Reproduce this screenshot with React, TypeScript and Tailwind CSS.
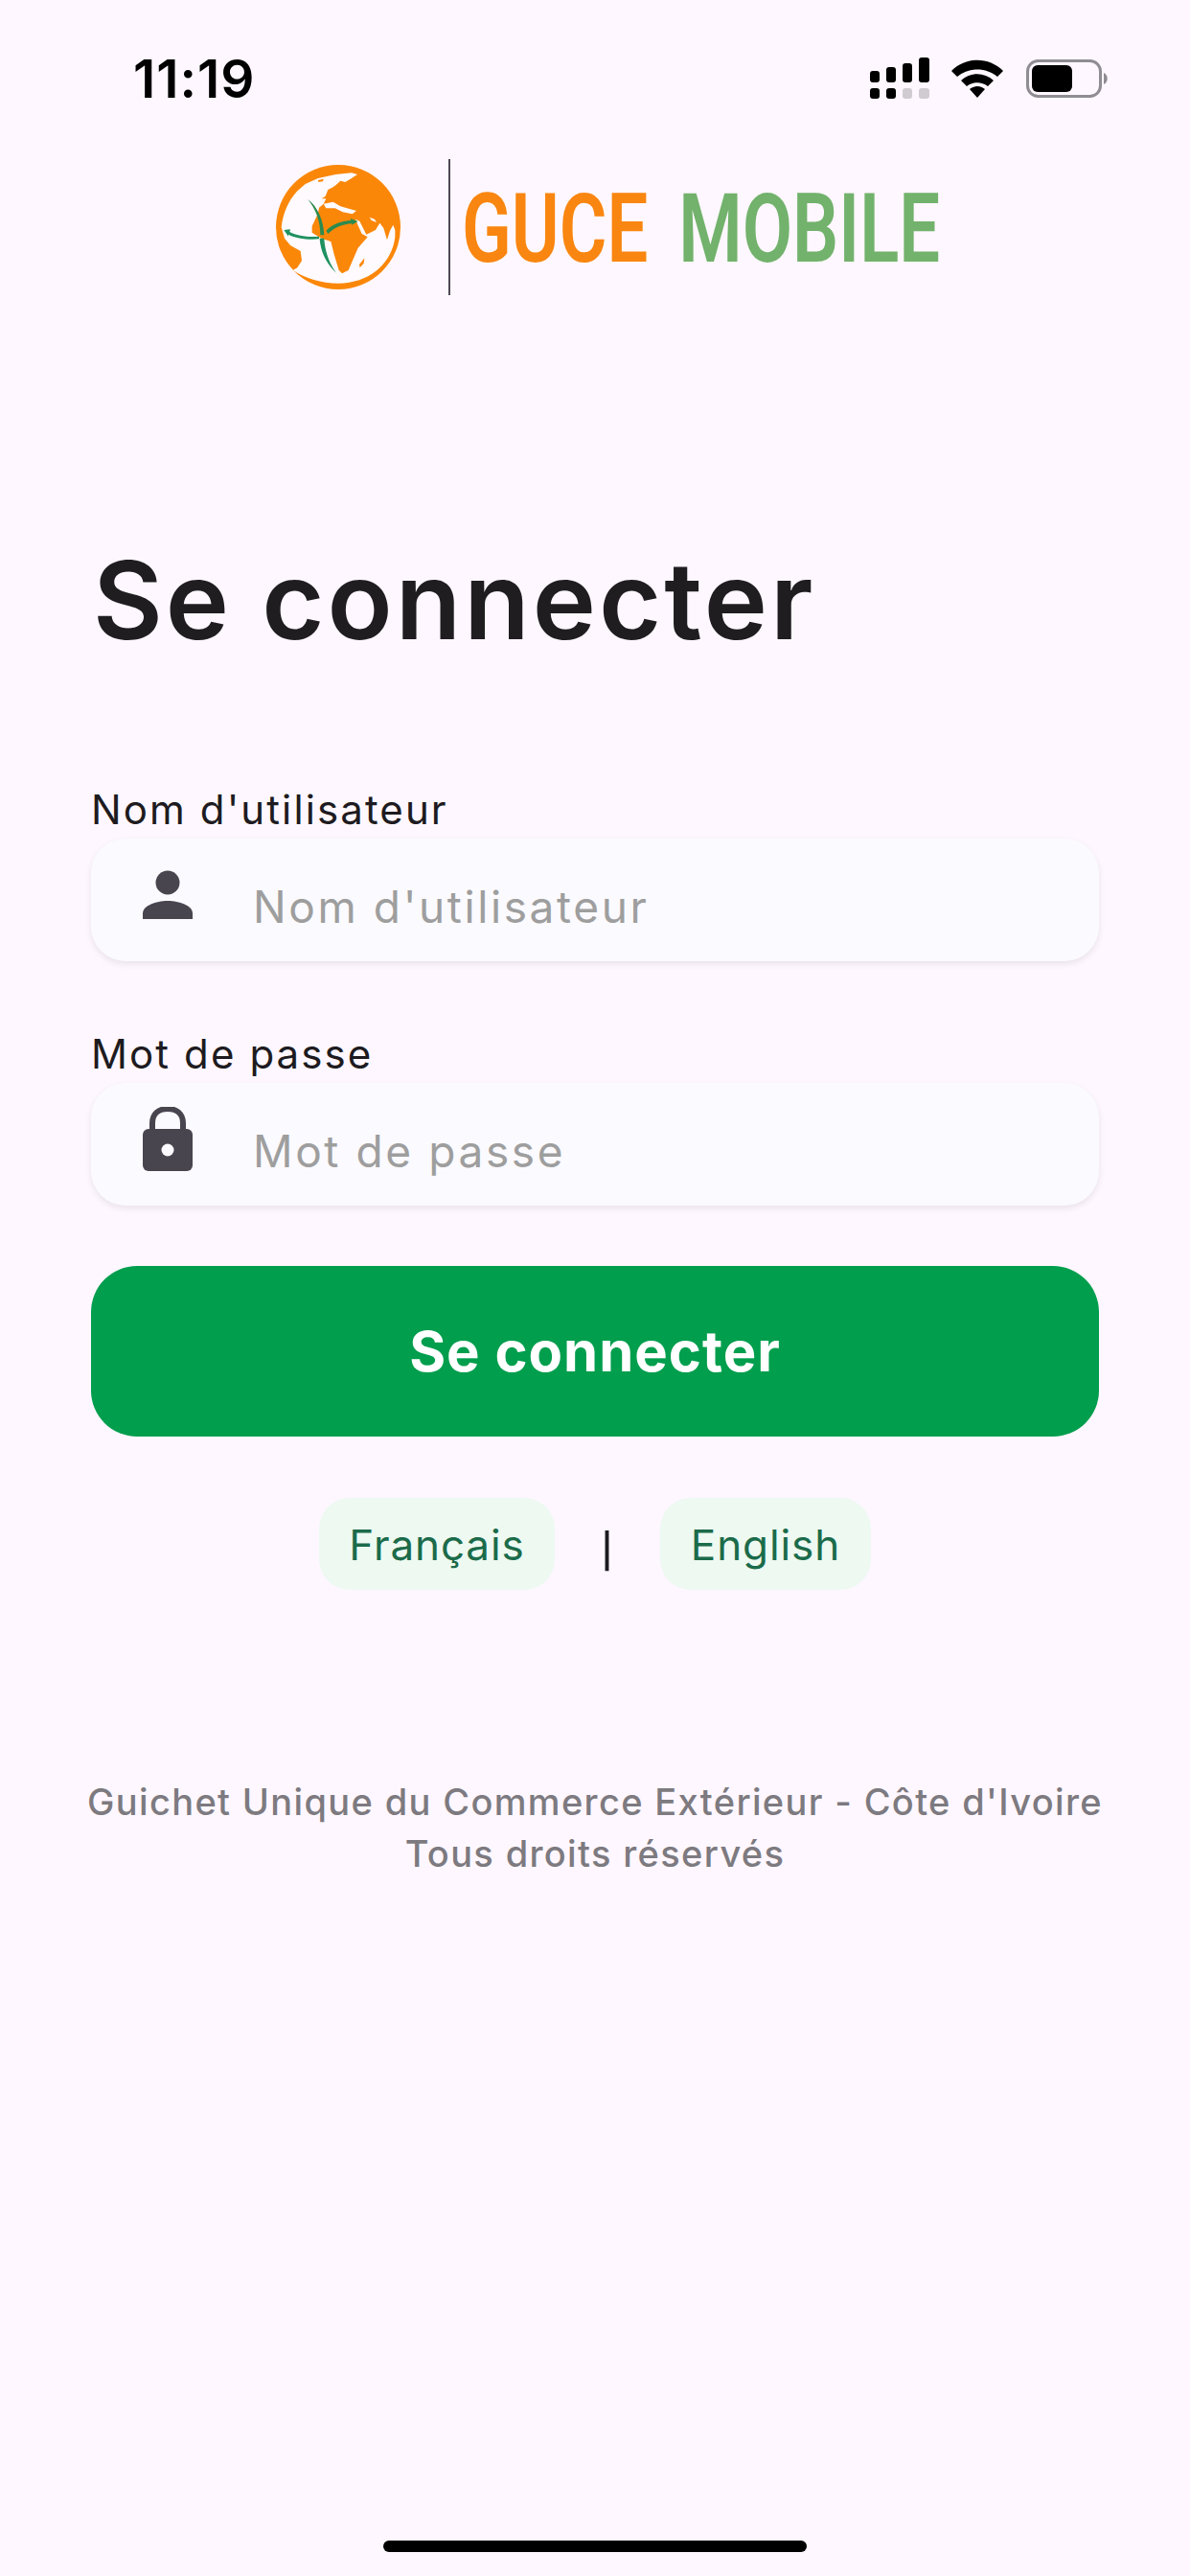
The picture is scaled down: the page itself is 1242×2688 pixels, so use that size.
import React from "react";

function Signal() {
    return (
        <svg width="62" height="43" viewBox="0 0 62 43">
            <rect x="0" y="14" width="10" height="12" rx="3" fill="#000" />
            <rect x="17" y="10" width="10" height="16" rx="3" fill="#000" />
            <rect x="34" y="6" width="10" height="20" rx="3" fill="#000" />
            <rect x="51" y="0" width="11" height="26" rx="3" fill="#000" />
            <rect x="0" y="32" width="10" height="11" rx="3" fill="#000" />
            <rect x="17" y="32" width="10" height="11" rx="3" fill="#000" />
            <rect x="34" y="32" width="10" height="11" rx="3" fill="#cfcbd0" />
            <rect x="51" y="32" width="11" height="11" rx="3" fill="#cfcbd0" />
        </svg>
    );
}

function Wifi() {
    return (
        <svg width="54" height="40" viewBox="0 0 54 40">
            <path d="M0 12 C15 -3 39 -3 54 12 L48 18 C36 8 18 8 6 18 Z" fill="#000" />
            <path d="M10 22 C20 13 34 13 44 22 L38 28 C31 23 23 23 16 28 Z" fill="#000" />
            <path d="M19 31 C24 27 30 27 35 31 L27 40 Z" fill="#000" />
        </svg>
    );
}

function Battery() {
    return (
        <svg width="86" height="40" viewBox="0 0 86 40">
            <rect x="1.5" y="1.5" width="76" height="37" rx="11" fill="none" stroke="#8f8c92" strokeWidth="3" />
            <rect x="6" y="6" width="42" height="28" rx="6" fill="#000" />
            <path d="M81 14 C86 16 86 24 81 26 Z" fill="#8f8c92" />
        </svg>
    );
}

function Globe() {
    return (
        <svg width="130" height="130" viewBox="83 70 390 390">
            <circle cx="278" cy="265" r="195" fill="#fb8708" />
            <path
                d="M150 152 L175 130 L215 112 L270 100 L320 95 L338 100 L320 112 L300 124 L285 120 L272 132 L262 140 L246 148 L238 168 L226 176 L240 176 L232 192 L218 204 L214 224 L196 262 L196 282 L225 300 L255 310 L265 350 L280 400 L290 410 L310 400 L325 365 L340 330 L370 296 L352 286 L340 260 L332 240 L345 246 L366 288 L395 274 L408 252 L420 268 L431 305 L440 276 L450 258 L456 274 L456 296 C448 370 385 440 278 441 C225 441 175 425 136 400 L150 392 L164 370 L160 340 L128 322 L110 300 L100 265 C105 222 122 182 150 152 Z"
                fill="#fefafd"
            />
            <path d="M232 192 L262 186 L285 200 L335 214 L322 224 L292 218 L268 206 L240 206 Z" fill="#fefafd" />
            <path d="M376 234 L392 240 L398 250 L382 244 Z" fill="#fefafd" />
            <path d="M344 382 L360 362 L358 378 L346 392 Z" fill="#fb8708" />
            <path d="M215 118 L232 114 L230 122 L216 124 Z" fill="#fb8708" />
            <path d="M183 178 C212 200 232 240 234 290 L222 290 C222 245 208 210 183 178 Z" fill="#2c8a4e" />
            <path d="M108 274 L128 272 L126 280 C150 292 185 298 218 294 L218 302 C185 306 145 300 122 288 L122 294 Z" fill="#1f9160" />
            <path d="M240 276 C262 252 295 246 318 244 L316 238 L340 247 L320 258 L320 254 C295 256 268 264 246 286 Z" fill="#2c8a4e" />
            <path d="M220 300 L234 300 C236 340 250 380 272 408 C245 385 222 345 220 300 Z" fill="#1f9160" />
        </svg>
    );
}

function UserIcon() {
    return (
        <svg width="52" height="52" viewBox="0 0 52 52">
            <circle cx="26" cy="13" r="12.5" fill="#49454f" />
            <path d="M0 51 L0 45 C0 37 14 32 26 32 C38 32 52 37 52 45 L52 51 Z" fill="#49454f" />
        </svg>
    );
}

function LockIcon() {
    return (
        <svg width="52" height="68" viewBox="0 0 52 68">
            <path d="M10 26 L10 17 C10 7 17 2 26 2 C35 2 42 7 42 17 L42 26" fill="none" stroke="#49454f" strokeWidth="6" />
            <rect x="0" y="23" width="52" height="44" rx="6" fill="#49454f" />
            <circle cx="26" cy="45" r="6.5" fill="#fbfafe" />
        </svg>
    );
}

function Field({ label, icon }: { label: string; icon: React.ReactNode }) {
    return (
        <div className="flex flex-col">
            <label className="h-[52px] text-[42px] leading-[52px] tracking-[2.1px] text-[#1d1b20]">
                {label}
            </label>
            <div className="mt-[4px] h-[128px] rounded-[36px] bg-[#fbfafe] shadow-[0_3px_6px_rgba(60,50,70,0.10)] flex items-center">
                <div className="w-[169px] shrink-0 flex justify-center pr-[9px] pb-[10px]">{icon}</div>
                <input
                    placeholder={label}
                    className="flex-1 min-w-0 bg-transparent outline-none text-[46px] tracking-[2.6px] text-[#1d1b20] placeholder:text-[#9e9e9e] pt-[14px]"
                />
            </div>
        </div>
    );
}

export default function App() {
    return (
        <div className="min-h-[2688px] h-[2688px] w-[1242px] bg-[#fef7ff] flex flex-col font-['Inter',sans-serif]">
            <div className="h-[166px] shrink-0 pl-[139px] pr-[85px] pt-[52px] flex justify-between items-start">
                <span className="text-[55px] leading-[60px] font-semibold text-black tracking-[1px]">11:19</span>
                <div className="flex items-center pt-[8px]">
                    <Signal />
                    <div className="w-[23px]" />
                    <Wifi />
                    <div className="w-[24px]" />
                    <Battery />
                </div>
            </div>

            <div className="flex items-center h-[142px] shrink-0 pl-[288px]">
                <Globe />
                <div className="w-[2px] h-[142px] bg-[#4c4854] ml-[50px]" />
                <div className="font-['Roboto',sans-serif] text-[100px] leading-[142px] font-semibold whitespace-nowrap origin-left scale-x-[0.76] ml-[12px] pt-[4px]">
                    <span className="text-[#f98610]">GUCE</span>
                    <span className="text-[#72b26c] ml-[42px]">MOBILE</span>
                </div>
            </div>

            <h1 className="mt-[250px] px-[97px] text-[112px] leading-[136px] font-semibold text-[#1f1d20] tracking-[3px]">
                Se connecter
            </h1>

            <div className="mt-[125px] px-[95px] flex flex-col gap-[71px]">
                <Field label="Nom d'utilisateur" icon={<UserIcon />} />
                <Field label="Mot de passe" icon={<LockIcon />} />
            </div>

            <div className="mt-[63px] mx-[95px] h-[178px] rounded-[48px] bg-[#009e4d] flex items-center justify-center text-white text-[58px] font-bold tracking-[1px]">
                Se connecter
            </div>

            <div className="mt-[64px] flex justify-center items-center text-[44px] tracking-[0.9px] text-[#1b6b4a]">
                <span className="h-[96px] w-[246px] rounded-[32px] bg-[#edf9f1] flex items-center justify-center pt-[2px]">Français</span>
                <span className="w-[110px] text-center text-[#1d1b20] font-['Roboto',sans-serif] font-medium text-[50px] pt-[10px]">|</span>
                <span className="h-[96px] w-[220px] rounded-[32px] bg-[#edf9f1] flex items-center justify-center pt-[2px]">English</span>
            </div>

            <div className="mt-[194px] text-center text-[38px] leading-[54px] font-medium tracking-[1.35px] text-[#7d7a80]">
                <p>Guichet Unique du Commerce Extérieur - Côte d'Ivoire</p>
                <p>Tous droits réservés</p>
            </div>

            <div className="mt-auto mb-[25px] mx-auto w-[442px] h-[12px] rounded-full bg-black" />
        </div>
    );
}
